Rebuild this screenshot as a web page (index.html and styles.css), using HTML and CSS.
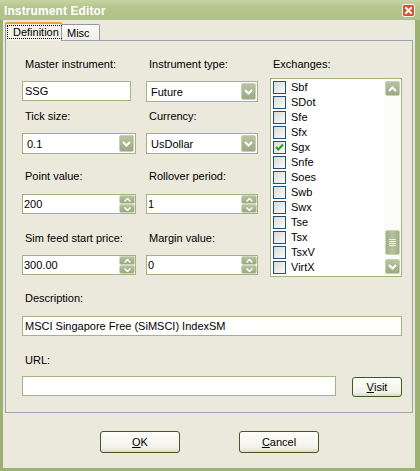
FILE: index.html
```html
<!DOCTYPE html>
<html>
<head>
<meta charset="utf-8">
<title>Instrument Editor</title>
<link rel="stylesheet" href="styles.css">
</head>
<body>
<div class="window">
  <div class="titlebar">
    <span class="title">Instrument Editor</span>
    <span class="close">
      <svg width="13" height="13" viewBox="0 0 13 13">
        <rect x="0.5" y="0.5" width="12" height="12" rx="2" fill="#d9512b" stroke="#fff"/>
        <path d="M4 4 L9 9 M9 4 L4 9" stroke="#fff" stroke-width="2" stroke-linecap="square"/>
      </svg>
    </span>
  </div>
  <div class="client">
    <div class="tabs">
      <div class="tab active"><span class="focus">Definition</span></div>
      <div class="tab">Misc</div>
    </div>
    <div class="panel">
      <div class="top">
        <div class="fields">
          <div class="field">
            <div class="label">Master instrument:</div>
            <div class="textbox master">SSG</div>
          </div>
          <div class="field">
            <div class="label">Instrument type:</div>
            <div class="combo"><span class="value">Future</span><span class="dropbtn"><svg width="9" height="6" viewBox="0 0 9 6"><path d="M1 1 L4.5 4.5 L8 1" fill="none" stroke="#fff" stroke-width="2"/></svg></span></div>
          </div>
          <div class="field">
            <div class="label">Tick size:</div>
            <div class="combo"><span class="value">0.1</span><span class="dropbtn"><svg width="9" height="6" viewBox="0 0 9 6"><path d="M1 1 L4.5 4.5 L8 1" fill="none" stroke="#fff" stroke-width="2"/></svg></span></div>
          </div>
          <div class="field">
            <div class="label">Currency:</div>
            <div class="combo"><span class="value">UsDollar</span><span class="dropbtn"><svg width="9" height="6" viewBox="0 0 9 6"><path d="M1 1 L4.5 4.5 L8 1" fill="none" stroke="#fff" stroke-width="2"/></svg></span></div>
          </div>
          <div class="field row3">
            <div class="label">Point value:</div>
            <div class="spin"><span class="value">200</span><span class="spinbtns"><span class="sb"><svg width="7" height="4" viewBox="0 0 7 4"><path d="M0.5 3.5 L3.5 0.5 L6.5 3.5" fill="none" stroke="#fff" stroke-width="1.5"/></svg></span><span class="sb"><svg width="7" height="4" viewBox="0 0 7 4"><path d="M0.5 0.5 L3.5 3.5 L6.5 0.5" fill="none" stroke="#fff" stroke-width="1.5"/></svg></span></span></div>
          </div>
          <div class="field row3">
            <div class="label">Rollover period:</div>
            <div class="spin"><span class="value">1</span><span class="spinbtns"><span class="sb"><svg width="7" height="4" viewBox="0 0 7 4"><path d="M0.5 3.5 L3.5 0.5 L6.5 3.5" fill="none" stroke="#fff" stroke-width="1.5"/></svg></span><span class="sb"><svg width="7" height="4" viewBox="0 0 7 4"><path d="M0.5 0.5 L3.5 3.5 L6.5 0.5" fill="none" stroke="#fff" stroke-width="1.5"/></svg></span></span></div>
          </div>
          <div class="field">
            <div class="label">Sim feed start price:</div>
            <div class="spin"><span class="value">300.00</span><span class="spinbtns"><span class="sb"><svg width="7" height="4" viewBox="0 0 7 4"><path d="M0.5 3.5 L3.5 0.5 L6.5 3.5" fill="none" stroke="#fff" stroke-width="1.5"/></svg></span><span class="sb"><svg width="7" height="4" viewBox="0 0 7 4"><path d="M0.5 0.5 L3.5 3.5 L6.5 0.5" fill="none" stroke="#fff" stroke-width="1.5"/></svg></span></span></div>
          </div>
          <div class="field">
            <div class="label">Margin value:</div>
            <div class="spin"><span class="value">0</span><span class="spinbtns"><span class="sb"><svg width="7" height="4" viewBox="0 0 7 4"><path d="M0.5 3.5 L3.5 0.5 L6.5 3.5" fill="none" stroke="#fff" stroke-width="1.5"/></svg></span><span class="sb"><svg width="7" height="4" viewBox="0 0 7 4"><path d="M0.5 0.5 L3.5 3.5 L6.5 0.5" fill="none" stroke="#fff" stroke-width="1.5"/></svg></span></span></div>
          </div>
        </div>
        <div class="exchanges">
          <div class="label">Exchanges:</div>
          <div class="listbox">
            <div class="items">
              <div class="item"><span class="cb"></span>Sbf</div>
              <div class="item"><span class="cb"></span>SDot</div>
              <div class="item"><span class="cb"></span>Sfe</div>
              <div class="item"><span class="cb"></span>Sfx</div>
              <div class="item"><span class="cb"><svg width="11" height="11" viewBox="0 0 11 11"><path d="M2 5 L4.3 7.5 L9 2.5" fill="none" stroke="#21a121" stroke-width="2"/></svg></span>Sgx</div>
              <div class="item"><span class="cb"></span>Snfe</div>
              <div class="item"><span class="cb"></span>Soes</div>
              <div class="item"><span class="cb"></span>Swb</div>
              <div class="item"><span class="cb"></span>Swx</div>
              <div class="item"><span class="cb"></span>Tse</div>
              <div class="item"><span class="cb"></span>Tsx</div>
              <div class="item"><span class="cb"></span>TsxV</div>
              <div class="item"><span class="cb"></span>VirtX</div>
            </div>
            <div class="scrollbar">
              <span class="sbtn"><svg width="9" height="6" viewBox="0 0 9 6"><path d="M1 5 L4.5 1.5 L8 5" fill="none" stroke="#fff" stroke-width="2"/></svg></span>
              <span class="track"><span class="thumb"><span class="grip"></span></span></span>
              <span class="sbtn"><svg width="9" height="6" viewBox="0 0 9 6"><path d="M1 1 L4.5 4.5 L8 1" fill="none" stroke="#fff" stroke-width="2"/></svg></span>
            </div>
          </div>
        </div>
      </div>
      <div class="label desc-label">Description:</div>
      <div class="textbox desc">MSCI Singapore Free (SiMSCI) IndexSM</div>
      <div class="label url-label">URL:</div>
      <div class="url-row">
        <div class="textbox url"></div>
        <div class="button visit"><u>V</u>isit</div>
      </div>
    </div>
    <div class="buttons">
      <div class="button big"><u>O</u>K</div>
      <div class="button big"><u>C</u>ancel</div>
    </div>
  </div>
</div>
</body>
</html>
```
FILE: styles.css
```css
html, body {
  margin: 0;
  padding: 0;
}
body {
  width: 420px;
  height: 471px;
  overflow: hidden;
  font-family: "Liberation Sans", Arial, sans-serif;
  font-size: 11px;
  color: #000;
}
.window {
  width: 420px;
  height: 471px;
  box-sizing: border-box;
  background: #9db272;
  display: flex;
  flex-direction: column;
}
.titlebar {
  height: 20px;
  flex: none;
  background: linear-gradient(#c6d3a2, #b3c48c 40%, #b0c189);
  display: flex;
  align-items: center;
  justify-content: space-between;
  padding: 0 5px 0 4px;
}
.title {
  color: #fff;
  font-weight: bold;
  font-size: 12px;
  letter-spacing: 0.1px;
  margin-top: 1px;
}
.close {
  display: flex;
  margin-top: 1px;
}
.client {
  flex: 1;
  margin: 0 5px 3px 3px;
  background: #ebe8dc;
  display: flex;
  flex-direction: column;
  padding-top: 2px;
}
.tabs {
  display: flex;
  align-items: flex-start;
  height: 19px;
  margin: 0 0 -1px 2px;
  position: relative;
  z-index: 1;
}
.tab {
  box-sizing: border-box;
  height: 16px;
  margin-top: 2px;
  width: 38px;
  border: 1px solid #919b9c;
  border-bottom: none;
  border-left: none;
  border-radius: 0 2px 0 0;
  background: linear-gradient(#fbfbf8, #f0eee6);
  padding: 2px 0 0 5px;
  line-height: 13px;
}
.tab.active {
  width: 57px;
  height: 19px;
  margin-top: 0;
  border-left: 1px solid #919b9c;
  border-top: 2px solid #e8a23a;
  border-radius: 2px 2px 0 0;
  background: #f3f1e9;
  padding: 1px 0 0 1px;
}
.focus {
  display: inline-block;
  border: 1px dotted #000;
  padding: 0 6px 0 5px;
  line-height: 12px;
}
.panel {
  width: 408px;
  height: 373px;
  box-sizing: border-box;
  margin-left: 2px;
  border: 1px solid #9aa3b3;
  background: #ebe8dc;
  padding: 17px 0 0 16px;
}
.top {
  display: flex;
  align-items: flex-start;
}
.fields {
  display: grid;
  grid-template-columns: 114px 112px;
  grid-template-rows: 52px 60px 62px auto;
  column-gap: 10px;
}
.label {
  height: 13px;
  line-height: 13px;
  padding-left: 3px;
  white-space: nowrap;
}
.field .label {
  margin-bottom: 10px;
}
.field.row3 .label {
  margin-bottom: 11px;
}
.textbox {
  box-sizing: border-box;
  height: 20px;
  border: 1px solid #a4b380;
  background: #fff;
  padding-left: 2px;
  line-height: 18px;
  white-space: nowrap;
}
.textbox.master {
  width: 109px;
}
.combo, .spin {
  box-sizing: border-box;
  border: 1px solid #a4b380;
  background: #fff;
  display: flex;
  align-items: center;
  justify-content: space-between;
}
.combo {
  height: 21px;
  padding: 1px;
}
.combo .value {
  padding-left: 3px;
}
.dropbtn {
  width: 15px;
  height: 17px;
  box-sizing: border-box;
  border-radius: 2px;
  background: linear-gradient(#b9c49f, #9aa984);
  border: 1px solid #c7d0b1;
  display: flex;
  align-items: center;
  justify-content: center;
}
.spin {
  height: 20px;
  padding: 0 0 0 1px;
}
.spinbtns {
  display: flex;
  flex-direction: column;
  width: 16px;
  height: 18px;
  gap: 0;
}
.sb {
  flex: 1;
  border-radius: 2px;
  background: linear-gradient(#b6c29c, #98a782);
  border: 1px solid #d0d8be;
  display: flex;
  align-items: center;
  justify-content: center;
}
.exchanges {
  margin-left: 12px;
}
.exchanges .label {
  margin-bottom: 7px;
}
.listbox {
  box-sizing: border-box;
  width: 132px;
  height: 199px;
  border: 1px solid #a4b380;
  background: #fff;
  display: flex;
}
.items {
  flex: 1;
  padding-top: 0.5px;
}
.item {
  height: 15px;
  display: flex;
  align-items: center;
  padding-left: 2px;
  line-height: 15px;
}
.cb {
  box-sizing: border-box;
  width: 13px;
  height: 13px;
  border: 1px solid #1c5180;
  background: linear-gradient(135deg, #dcdcd4, #fbfbf9);
  margin-right: 5px;
  display: flex;
  align-items: center;
  justify-content: center;
}
.scrollbar {
  width: 17px;
  box-sizing: border-box;
  padding: 2px 1px 2px 1px;
  display: flex;
  flex-direction: column;
  background: #fbfbf7;
}
.sbtn {
  height: 15px;
  flex: none;
  box-sizing: border-box;
  border-radius: 2px;
  background: linear-gradient(#b9c49f, #9aa984);
  border: 1px solid #c7d0b1;
  display: flex;
  align-items: center;
  justify-content: center;
}
.track {
  flex: 1;
  display: flex;
  flex-direction: column;
  justify-content: flex-end;
}
.thumb {
  height: 25px;
  margin-bottom: 4px;
  box-sizing: border-box;
  border-radius: 2px;
  background: linear-gradient(90deg, #a3b18a, #b6c29c 50%, #a0ae88);
  border: 1px solid #c9d2b4;
  display: flex;
  align-items: center;
  justify-content: center;
}
.grip {
  width: 7px;
  height: 7px;
  background: repeating-linear-gradient(#eef2e4 0 1px, transparent 1px 2px);
}
.desc-label {
  margin-top: 15px;
}
.desc {
  margin-top: 11px;
  width: 380px;
  padding-left: 2px;
}
.url-label {
  margin-top: 18px;
}
.url-row {
  display: flex;
  align-items: flex-start;
  margin-top: 9px;
}
.url {
  width: 314px;
}
.button {
  box-sizing: border-box;
  border: 1px solid #3d5b1f;
  border-radius: 3px;
  background: linear-gradient(#fefefb, #f3f1e8 80%, #dcd9c8);
  display: flex;
  align-items: center;
  justify-content: center;
  color: #000;
}
.visit {
  width: 50px;
  height: 20px;
  margin: 1px 0 0 16px;
}
.buttons {
  display: flex;
  margin-top: 18px;
  padding-left: 97px;
  gap: 59px;
}
.button.big {
  width: 80px;
  height: 22px;
}
```
